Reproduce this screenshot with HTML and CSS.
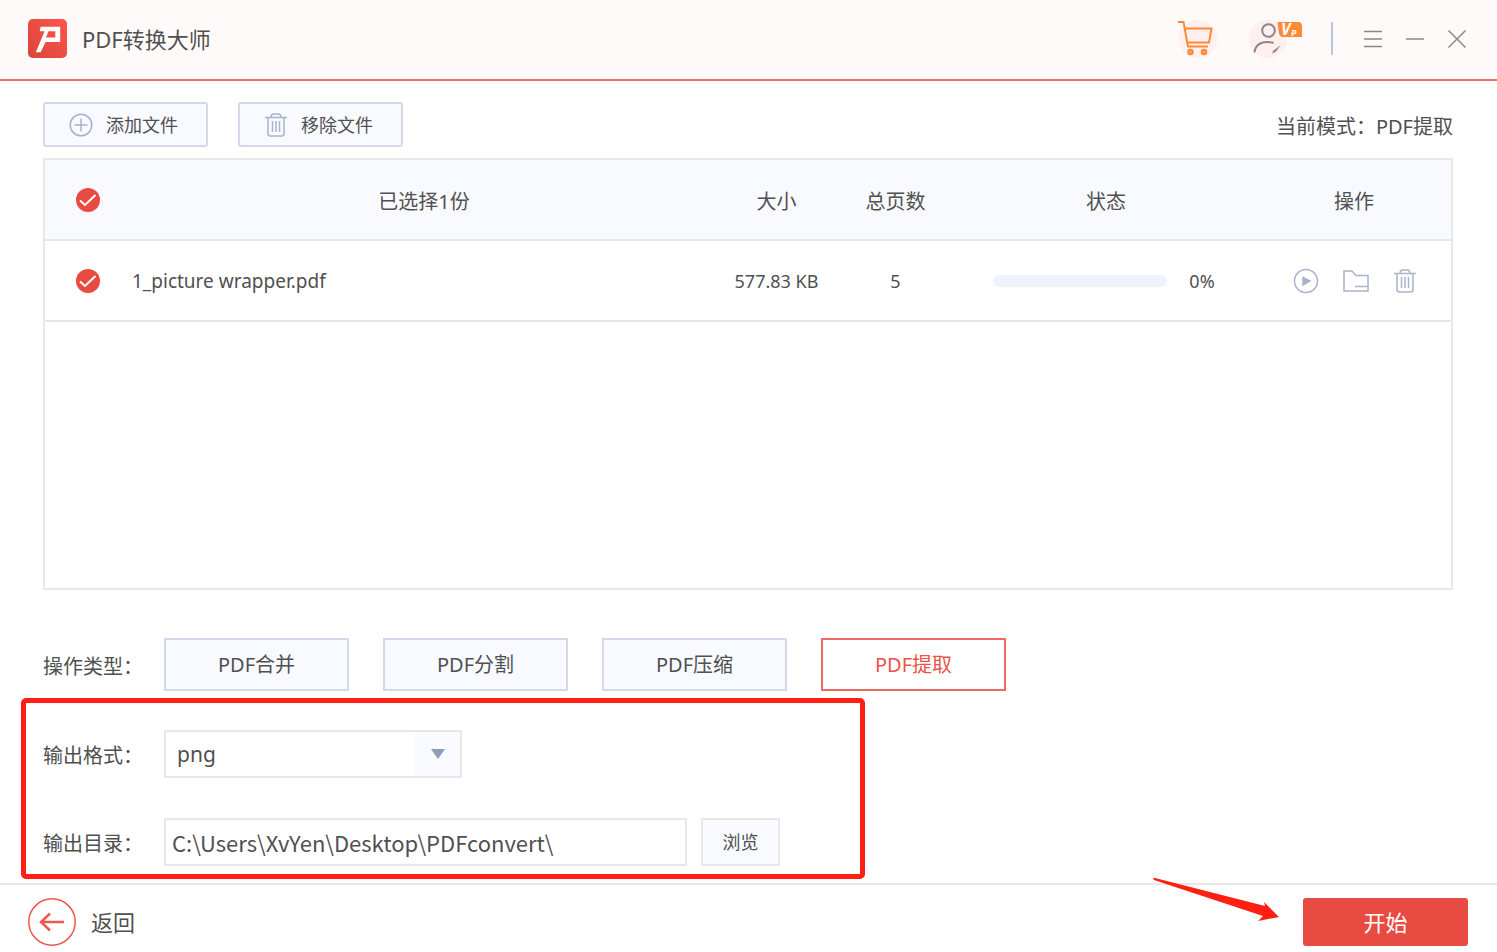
FILE: index.html
```html
<!DOCTYPE html>
<html lang="zh-CN">
<head>
<meta charset="utf-8">
<title>PDF转换大师</title>
<link rel="stylesheet" href="styles.css">
</head>
<body>
<svg class="sprite" aria-hidden="true">
  <symbol id="trash" viewBox="0 0 24 26">
    <path d="M1 5.5h22M7 5.5c0-2.500 1-3.500 3-3.500h4c2 0 3 1 3 3.500M4 5.500V21.500a2.500 2.500 0 0 0 2.500 2.500h11a2.500 2.500 0 0 0 2.500-2.500V5.500M8.500 9v11M12 9v11M15.500 9v11" fill="none" stroke="currentColor" stroke-width="1.500"/>
  </symbol>
  <symbol id="tick" viewBox="0 0 24 24">
    <path d="M4 12.500l5 4.500L19.500 7" fill="none" stroke="#fff" stroke-width="2"/>
  </symbol>
</svg>

<header class="titlebar">
  <svg class="logo" viewBox="0 0 40 40" aria-hidden="true">
    <defs><linearGradient id="logo-fill" x1="0" y1="1" x2="1" y2="0"><stop offset="0" stop-color="#d8453c"/><stop offset="1" stop-color="#ff5449"/></linearGradient></defs>
    <rect width="40" height="40" rx="5" fill="url(#logo-fill)"/>
    <path fill="#fff" fill-rule="evenodd" d="M13 8h20v15.500H18L13 34H8L17 12.500h-5zM21 12.500L18.500 19H28V12.500z"/>
  </svg>
  <h1 class="title">PDF转换大师</h1>
  <div class="account">
    <button class="bare" aria-label="购物车">
      <svg width="40" height="40" viewBox="0 0 40 40">
        <circle cx="21" cy="20" r="19" fill="#ffefee"/>
        <g fill="none" stroke="#ff8a33" stroke-width="2"><path d="M1 3h5.500L11 27.500H31M7.500 9.500H34.500L32 23.500H10.500"/><circle cx="13.500" cy="33" r="2.300" fill="#ffa563"/><circle cx="27" cy="33" r="2.300" fill="#ffa563"/></g>
      </svg>
    </button>
    <button class="bare" aria-label="会员">
      <svg width="56" height="40" viewBox="0 0 56 40">
        <circle cx="21" cy="20" r="19" fill="#ffefee"/>
        <g fill="none" stroke="#8c8686" stroke-width="2"><circle cx="21.500" cy="11.500" r="6.300"/><path d="M7.500 33.500c.5-7 6-10.500 12.500-10.500q4 0 6.500 1"/></g>
        <path d="M34 26l-7.500 5.500-1.500 3 3.500-1.500z" fill="#8c8686"/>
        <path d="M30.500 3H51q4 0 4 4V18H36q-3 0-4-3.500Z" fill="#ff8a33"/>
        <text x="34" y="16" class="badge-v">V</text><text x="44" y="17" class="badge-p">P</text>
      </svg>
    </button>
  </div>
  <div class="window-controls">
    <button class="bare" aria-label="菜单"><svg width="20" height="20" viewBox="0 0 20 20"><path d="M1 2.500h18M1 10h18M1 17.500h18"/></svg></button>
    <button class="bare" aria-label="最小化"><svg width="20" height="20" viewBox="0 0 20 20"><path d="M1 10h18"/></svg></button>
    <button class="bare" aria-label="关闭"><svg width="20" height="20" viewBox="0 0 20 20"><path d="M1.500 1.500l17 17M18.500 1.500l-17 17"/></svg></button>
  </div>
</header>

<main class="content">
  <div class="toolbar">
    <button class="tool"><svg class="icon" width="24" height="24" viewBox="0 0 24 24"><circle cx="12" cy="12" r="10.800"/><path d="M12 5.500v13M5.500 12h13"/></svg>添加文件</button>
    <button class="tool"><svg class="icon" width="24" height="26"><use href="#trash"/></svg>移除文件</button>
    <p class="mode">当前模式：PDF提取</p>
  </div>

  <section class="panel">
    <table class="files">
      <colgroup><col class="col-check"><col><col class="col-num"><col class="col-num"><col class="col-status"><col class="col-ops"></colgroup>
      <thead>
        <tr>
          <th class="pick"><label class="check"><input type="checkbox" checked aria-label="全选"><svg><use href="#tick"/></svg></label></th>
          <th>已选择1份</th><th>大小</th><th>总页数</th><th>状态</th><th>操作</th>
        </tr>
      </thead>
      <tbody>
        <tr>
          <td><label class="check"><input type="checkbox" checked aria-label="选择文件"><svg><use href="#tick"/></svg></label></td>
          <td class="name">1_picture wrapper.pdf</td>
          <td>577.83 KB</td>
          <td>5</td>
          <td><div class="status"><div class="track" role="progressbar" aria-valuenow="0" aria-label="进度"></div><span>0%</span></div></td>
          <td>
            <div class="ops">
              <button class="bare" aria-label="开始转换"><svg class="icon" width="26" height="26" viewBox="0 0 26 26"><circle cx="13" cy="13" r="11.500"/><path d="M10 9.500l7 3.500-7 4z" fill="currentColor"/></svg></button>
              <button class="bare" aria-label="打开文件夹"><svg class="icon" width="26" height="26" viewBox="0 0 26 26"><path d="M1 3h8l4 4.500h12V23H1zM12 18.500h13"/></svg></button>
              <button class="bare" aria-label="删除"><svg class="icon" width="24" height="26"><use href="#trash"/></svg></button>
            </div>
          </td>
        </tr>
      </tbody>
    </table>
  </section>

  <div class="row types">
    <span class="label">操作类型：</span>
    <div class="type-list">
      <button class="type">PDF合并</button>
      <button class="type">PDF分割</button>
      <button class="type">PDF压缩</button>
      <button class="type active">PDF提取</button>
    </div>
  </div>

  <section class="output">
    <div class="row">
      <label class="label" for="format">输出格式：</label>
      <div class="select">
        <select id="format"><option>png</option></select>
        <span class="caret"><svg width="14" height="10" viewBox="0 0 14 10"><path d="M0 0h14L7 10z" fill="#8d9db8"/></svg></span>
      </div>
    </div>
    <div class="row">
      <label class="label" for="folder">输出目录：</label>
      <input class="path" id="folder" type="text" value="C:\Users\XvYen\Desktop\PDFconvert\">
      <button class="browse">浏览</button>
    </div>
    <div class="highlight"></div>
  </section>
</main>

<footer class="footer">
  <button class="back">
    <svg width="48" height="48" viewBox="0 0 48 48"><circle cx="24" cy="24" r="23.200" stroke-width="1.500"/><path d="M36 24H13M22 15.500L13 24l9 8.500" stroke-width="2.500"/></svg>
    返回
  </button>
  <button class="start">开始</button>
  <svg class="pointer" width="126" height="44" viewBox="0 0 126 44" aria-hidden="true"><path d="M0 0L2 0L112 28L111 24L126 39L105 43L110 38L1 2Z" fill="#ff2012"/></svg>
</footer>
</body>
</html>
```

FILE: styles.css
```css
* { box-sizing: border-box; }

body {
  margin: 0;
  min-height: 100vh;
  display: flex;
  flex-direction: column;
  background: #fff;
  color: #505050;
  font: 20px/28px "Noto Sans", "Noto Sans CJK SC", sans-serif;
}

button, input, select { font: inherit; color: inherit; margin: 0; }
button { cursor: pointer; }
svg { display: block; flex: none; }
.sprite { position: absolute; width: 0; height: 0; }
.bare { display: block; padding: 0; border: 0; background: none; }

.titlebar {
  display: flex;
  align-items: center;
  height: 81px;
  padding: 0 30px 2px 28px;
  background: #fffafa;
  border-bottom: 2px solid #ed7068;
}
.logo { width: 39px; height: 39px; }
.title { margin: 0 0 0 15px; font-size: 22px; font-weight: 400; }
.account { display: flex; gap: 30px; margin-left: auto; }
.badge-v { font: italic 700 16px "Open Sans", sans-serif; fill: #fff; }
.badge-p { font: italic 700 9px "Open Sans", sans-serif; fill: #fff; }
.window-controls {
  display: flex;
  align-items: center;
  gap: 22px;
  height: 33px;
  margin-left: 28px;
  padding-left: 30px;
  border-left: 2px solid #bcc5df;
}
.window-controls svg { fill: none; stroke: #8c8686; stroke-width: 1.5; }

.content {
  flex: 1;
  display: flex;
  flex-direction: column;
  padding: 21px 44px 17px 43px;
}
.toolbar { display: flex; align-items: center; gap: 30px; margin-bottom: 11px; }
.tool {
  display: flex;
  align-items: center;
  justify-content: center;
  gap: 13px;
  width: 165px;
  height: 45px;
  padding: 0 10px 0 6px;
  border: 2px solid #d3d9e9;
  border-radius: 3px;
  background: #f8faff;
  font-size: 18px;
}
.icon { color: #a9b3cc; fill: none; stroke: #a9b3cc; stroke-width: 1.5; }
.mode { margin: 0 0 0 auto; padding-top: 4px; }

.panel { flex: 1; border: 2px solid #e8e8e8; }
.files { width: 100%; table-layout: fixed; border-collapse: collapse; text-align: center; }
.files th, .files td { height: 81px; padding: 0; font-weight: 400; border-bottom: 2px solid #e6e6e6; }
.files th { height: 80px; padding-top: 4px; }
.files .pick { padding-top: 0; }
.files thead { background: #f8faff; }
.files td { font-size: 18px; }
.files .name { padding-left: 1px; text-align: left; font-size: 19px; }
.col-check { width: 86px; }
.col-num { width: 119px; }
.col-status { width: 302px; }
.col-ops { width: 194px; }
.check { display: grid; justify-content: center; }
.check input { grid-area: 1 / 1; appearance: none; width: 24px; height: 24px; border-radius: 50%; background: #e84b41; }
.check svg { grid-area: 1 / 1; width: 24px; height: 24px; pointer-events: none; }
.status { display: flex; align-items: center; justify-content: center; gap: 22px; padding-right: 4px; }
.track { width: 174px; height: 12px; border-radius: 6px; background: #eef3fd; }
.ops { display: flex; justify-content: center; gap: 24px; padding-left: 2px; }

.row { display: flex; align-items: center; }
.label { width: 121px; padding-top: 4px; white-space: nowrap; }
.types { margin: 48px 0 39px; }
.type-list { display: flex; gap: 34px; }
.type { width: 185px; height: 53px; border: 2px solid #d3d9e9; background: #f8faff; }
.type.active { border-color: #ee6b63; background: #fff; color: #e8544b; }

.output { position: relative; display: flex; flex-direction: column; gap: 40px; }
.select { position: relative; width: 298px; }
.select select {
  display: block;
  appearance: none;
  width: 100%;
  height: 48px;
  padding: 0 56px 0 11px;
  border: 2px solid #e8e8e8;
  background: #fff;
  font-size: 21px;
  line-height: 36px;
}
.caret {
  position: absolute;
  inset: 2px 2px 2px auto;
  display: grid;
  place-items: center;
  width: 45px;
  background: #f8faff;
  pointer-events: none;
}
.path {
  width: 523px;
  height: 48px;
  padding: 0 6px;
  border: 2px solid #e8e8e8;
  background: #fff;
  font-family: "Noto Sans CJK SC", sans-serif;
  font-size: 22px;
}
.browse { width: 79px; height: 48px; margin-left: 14px; padding: 0; border: 2px solid #e8e8e8; background: #f8faff; font-size: 18px; }
.highlight {
  position: absolute;
  top: -32px;
  bottom: -13px;
  left: -22px;
  width: 844px;
  border: 5px solid #ff2012;
  border-radius: 5px;
  pointer-events: none;
}

.footer {
  position: relative;
  display: flex;
  align-items: center;
  justify-content: space-between;
  padding: 13px 29px 6px 28px;
  border-top: 2px solid #e8e8e8;
}
.back { display: flex; align-items: center; gap: 15px; padding: 0; border: 0; background: none; font-size: 22px; }
.back svg { fill: none; stroke: #ea5a50; }
.start { width: 165px; height: 48px; border: 0; border-radius: 3px; background: #e84b41; color: #fff; font-size: 22px; }
.pointer { position: absolute; top: -7px; right: 218px; }
```
